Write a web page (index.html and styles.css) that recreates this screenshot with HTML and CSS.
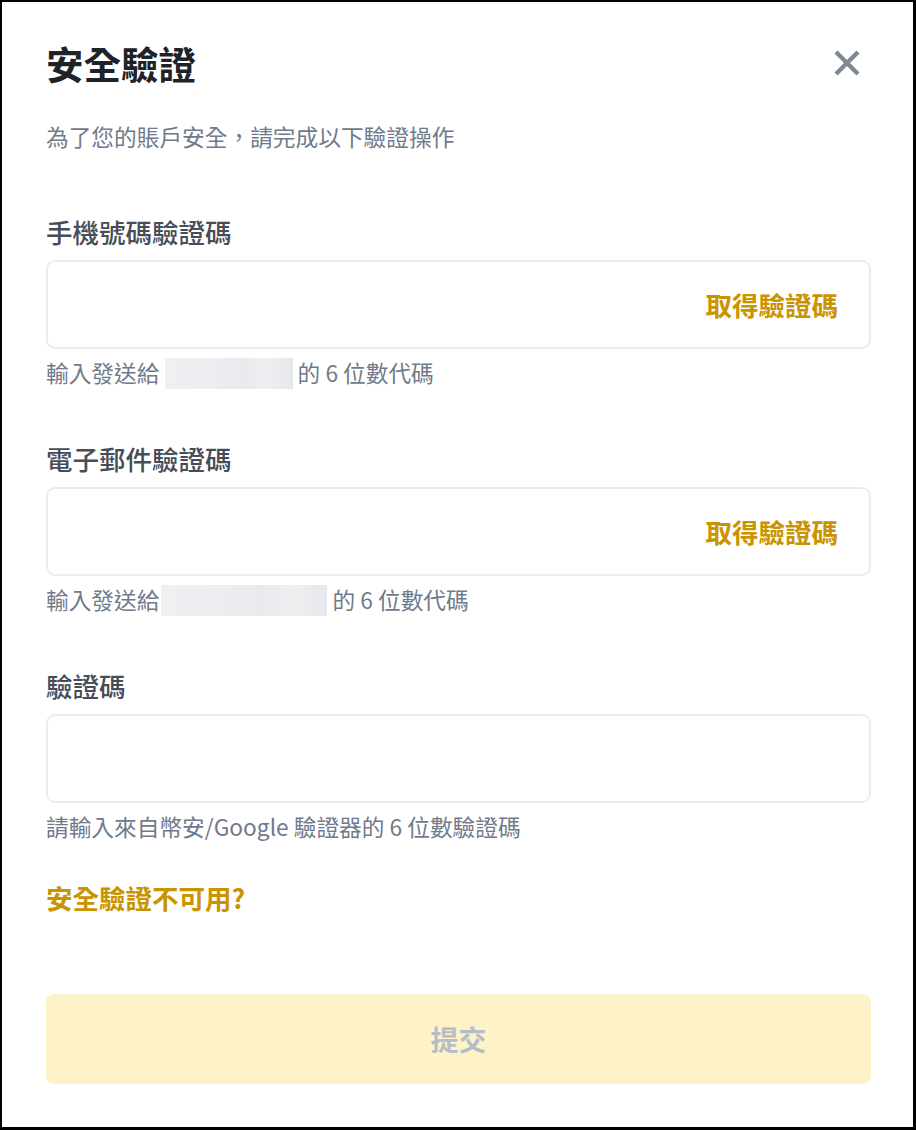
FILE: index.html
```html
<!DOCTYPE html>
<html lang="zh-Hant">
<head>
<meta charset="utf-8">
<title>安全驗證</title>
<link rel="stylesheet" href="styles.css">
</head>
<body>
<div class="modal">
  <div class="header">
    <h1 class="title">安全驗證</h1>
    <button class="close" aria-label="關閉">
      <svg width="28" height="28" viewBox="0 0 28 28"><path d="M3 3 L25 25 M25 3 L3 25" stroke="#7D8795" stroke-width="4.4" stroke-linecap="butt" fill="none"/></svg>
    </button>
  </div>
  <p class="subtitle">為了您的賬戶安全，請完成以下驗證操作</p>

  <div class="group first">
    <label class="label">手機號碼驗證碼</label>
    <div class="field"><input class="input" type="text"><button class="get-code">取得驗證碼</button></div>
    <p class="help">輸入發送給 <span class="redact r1"></span> 的 6 位數代碼</p>
  </div>

  <div class="group">
    <label class="label">電子郵件驗證碼</label>
    <div class="field"><input class="input" type="text"><button class="get-code">取得驗證碼</button></div>
    <p class="help">輸入發送給<span class="redact r2"></span> 的 6 位數代碼</p>
  </div>

  <div class="group">
    <label class="label">驗證碼</label>
    <div class="field"><input class="input" type="text"></div>
    <p class="help">請輸入來自幣安/Google 驗證器的 6 位數驗證碼</p>
  </div>

  <a class="unavailable" href="#">安全驗證不可用?</a>

  <button class="submit" disabled>提交</button>
</div>
</body>
</html>
```

FILE: styles.css
```css
* { box-sizing: border-box; }
html, body { margin: 0; padding: 0; background: #fff; }
body {
  width: 916px;
  height: 1130px;
  font-family: "Noto Sans CJK TC", "Noto Sans", sans-serif;
}
.modal {
  width: 916px;
  height: 1130px;
  border-style: solid;
  border-color: #000;
  border-width: 2px 3px 3px 2px;
  padding: 37px 42px 0 44px;
  display: flex;
  flex-direction: column;
}
.header {
  height: 48px;
  display: flex;
  align-items: center;
  justify-content: space-between;
}
.title {
  margin: 0;
  font-size: 37.5px;
  line-height: 48px;
  font-weight: 700;
  color: #1E2329;
}
.close {
  border: 0;
  background: none;
  padding: 0;
  width: 28px;
  height: 28px;
  margin-right: 10px;
  display: flex;
}
.subtitle {
  margin: 34px 0 0;
  font-size: 22.7px;
  line-height: 32px;
  color: #707A8A;
}
.group { display: flex; flex-direction: column; margin-top: 52px; }
.group.first { margin-top: 61px; }
.label {
  font-size: 26.5px;
  line-height: 36px;
  color: #474D57;
  font-weight: 500;
}
.field {
  margin-top: 10px;
  height: 89px;
  border: 2px solid #EAECEF;
  border-radius: 9px;
  display: flex;
  align-items: center;
  padding: 0 31px 0 20px;
}
.input {
  flex: 1;
  border: 0;
  outline: none;
  background: transparent;
  font-size: 24px;
  height: 100%;
}
.get-code {
  border: 0;
  background: none;
  padding: 0;
  font-family: inherit;
  font-size: 26.5px;
  font-weight: 700;
  color: #C99400;
}
.help {
  margin: 8px 0 0;
  font-size: 22.7px;
  line-height: 32px;
  color: #707A8A;
  display: flex;
  align-items: center;
  white-space: pre;
}
.redact {
  display: inline-block;
  height: 31px;
  background: linear-gradient(90deg, #EFF0F2 0%, #ECEDF0 40%, #E9EAED 60%, #EEEFF1 80%, #E6E7EA 100%);
}
.r1 { width: 128px; }
.r2 { width: 166px; margin-left: 2px; }
.unavailable {
  margin-top: 37px;
  font-size: 26.5px;
  line-height: 36px;
  font-weight: 700;
  color: #C99400;
  text-decoration: none;
}
.submit {
  margin-top: 78px;
  height: 90px;
  width: 100%;
  border: 0;
  border-radius: 8px;
  background: #FEF2C8;
  color: #B7BDC6;
  font-family: inherit;
  font-size: 28px;
  font-weight: 700;
}
```
